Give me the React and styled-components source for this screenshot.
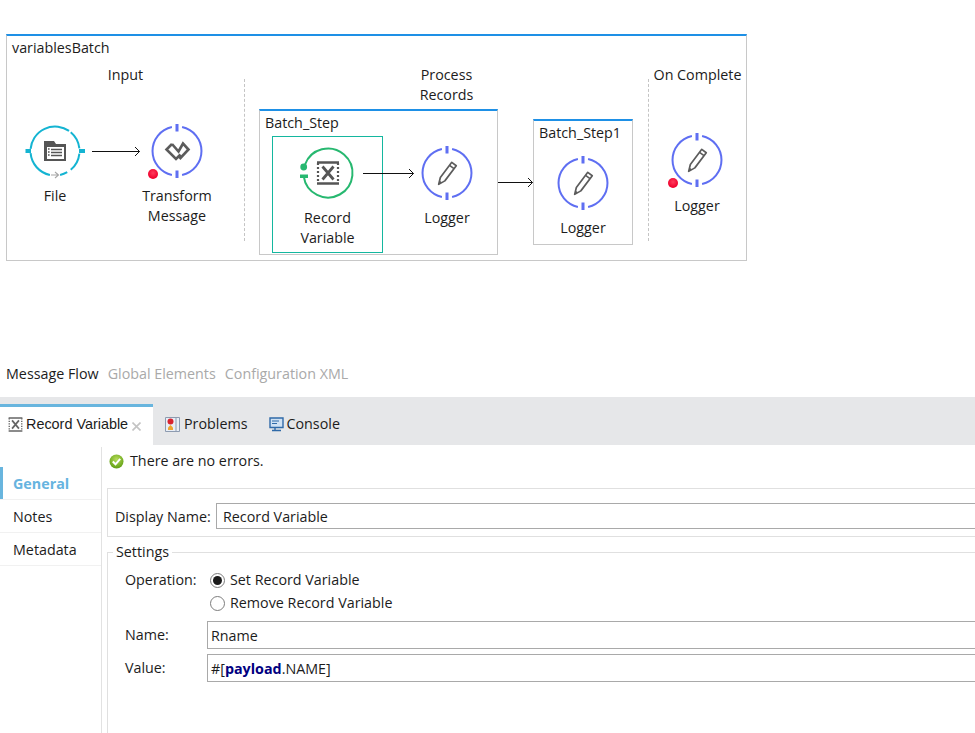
import React from 'react';
import styled, { createGlobalStyle } from 'styled-components';

const Global = createGlobalStyle`
  html, body { margin: 0; padding: 0; background: #fff; height: 733px; overflow: hidden; }
  body { font-family: "Open Sans", "Noto Sans", "Liberation Sans", sans-serif; font-size: 14.3px; line-height: 20px; color: #1c1c1c; }
`;

const FlowBox = styled.section`
  box-sizing: border-box; width: 741px; height: 227px; margin: 34px 0 0 6px;
  border: 1px solid #c8c8c8; border-top: 2px solid #1e90e6;
`;
const FlowTitle = styled.div`height: 29px; padding: 2px 0 0 5px; box-sizing: border-box;`;
const Lanes = styled.div`display: flex; align-items: flex-start;`;
const Lane = styled.div`width: ${p => p.$w}px; flex: none; display: flex; flex-direction: column;`;
const LaneTitle = styled.div`text-align: center;`;
const LaneSep = styled.div`width: 0; height: 162px; margin-top: 14px; flex: none; border-left: 1px dashed #c4c4c4;`;
const NodeRow = styled.div`display: flex; align-items: flex-start; padding-left: ${p => p.$pl || 0}px; margin-top: ${p => p.$mt || 0}px;`;

const NodeWrap = styled.div`
  width: ${p => p.$w}px; flex: none; position: relative; display: flex; flex-direction: column; align-items: center;
  margin-left: ${p => p.$ml || 0}px;
`;
const NodeIcon = styled.svg`width: 52px; height: 52px; overflow: visible; display: block;`;
const NodeLabel = styled.div`margin-top: ${p => p.$gap || 9}px; text-align: center; white-space: nowrap;`;
const RedDot = styled.span`
  position: absolute; width: 10px; height: 10px; border-radius: 50%; top: 44px; left: calc(50% - 29px);
  background: radial-gradient(circle at 50% 40%, #ff3b5c, #f0002c 70%);
`;
const Arrow = styled.svg`
  display: block; flex: none; width: ${p => p.$w}px; height: 10px; overflow: visible;
  margin-top: ${p => p.$mt || 0}px; margin-left: ${p => p.$ml || 0}px;
`;
const OverArrow = styled(Arrow)`position: absolute; left: ${p => p.$left}px; top: ${p => p.$top}px; margin: 0;`;

const StepBox = styled.div`
  box-sizing: border-box; width: ${p => p.$w}px; height: ${p => p.$h}px; flex: none; margin-top: ${p => p.$mt || 0}px;
  border: 1px solid #c8c8c8; border-top: 2px solid #1e90e6; position: relative;
`;
const StepTitle = styled.div`box-sizing: border-box; padding: 2px 0 0 5px; height: 20px; white-space: nowrap;`;
const StepBody = styled.div`display: flex; align-items: flex-start; padding: ${p => p.$pt}px 0 0 ${p => p.$pl}px;`;
const Selected = styled.div`
  box-sizing: border-box; width: 111px; height: 117px; border: 1px solid #14b79f; padding-top: 10px; flex: none;
  display: flex; justify-content: center;
`;
const LoggerPad = styled.div`padding-top: 11px;`;

const TabsLine = styled.nav`display: flex; gap: 9px; margin: 103px 0 0 6px; height: 20px;`;
const TabLink = styled.span`color: ${p => p.$on ? '#1c1c1c' : '#a9a9a9'};`;

const TabBar = styled.div`
  height: 48px; margin-top: 13px; background: #e6e7e9; display: flex; align-items: flex-end;
`;
const ActiveTab = styled.div`
  box-sizing: border-box; width: 153px; height: 41px; background: #fff; border-top: 3px solid #68b5de;
  display: flex; align-items: center; padding: 0 0 4px 8px; gap: 3px; font-family: "Liberation Sans", Arial, sans-serif; font-size: 14.4px;
`;
const PlainTab = styled.div`
  height: 41px; box-sizing: border-box; display: flex; align-items: center; padding: 3px 0 4px; gap: ${p => p.$gap}px; margin-left: ${p => p.$ml}px;
`;
const CloseMark = styled.svg`width: 9px; height: 9px; margin: 4px 0 0 1px; flex: none;`;
const TabIcon = styled.svg`width: 15px; height: 15px; flex: none; display: block;`;

const Panel = styled.div`display: flex; height: 288px;`;
const Side = styled.aside`
  box-sizing: border-box; width: 102px; flex: none; margin-top: 2px; border-right: 1px solid #e2e2e2;
  height: 286px; padding-top: 20px;
`;
const SideItem = styled.div`
  box-sizing: border-box; height: 33px; padding: 7px 0 0 13px; border-bottom: 1px solid #f1f1f1;
  ${p => p.$on && 'color: #66b4e0; font-weight: 700; box-shadow: inset 3px 0 0 #68b5de;'}
`;
const Main = styled.main`flex: 1; min-width: 0; overflow: hidden; padding-top: 6px;`;
const Status = styled.div`display: flex; align-items: center; gap: 6px; padding-left: 7px; height: 20px;`;
const NameGroup = styled.div`
  box-sizing: border-box; height: 49px; margin: 17px -12px 0 5px; border: 1px solid #e0e0e0; padding: 14px 0 0 7px;
  display: flex; align-items: flex-start;
`;
const NameLabel = styled.span`width: 101px; flex: none; padding-top: 4px;`;
const TextBox = styled.div`
  box-sizing: border-box; flex: 1; min-width: 0; height: ${p => p.$h}px; border: 1px solid #a9a9a9; border-right: 0;
  padding: 1px 0 0 ${p => p.$pl}px; display: flex; align-items: center; white-space: pre;
  margin-bottom: ${p => p.$mb || 0}px;
`;
const Settings = styled.fieldset`
  margin: 5px -12px 0 5px; padding: 8px 0 0 0; border: 1px solid #e0e0e0; height: 200px; min-width: 0;
`;
const SettingsLegend = styled.legend`padding: 0 3px 0 3px; margin-left: 5px; line-height: 20px;`;
const FormGrid = styled.div`display: grid; grid-template-columns: 82px 1fr; align-items: center; padding-left: 17px;`;
const RadioStack = styled.div`display: flex; flex-direction: column; gap: 3px; padding-left: 3px; margin-bottom: 8px;`;
const RadioRow = styled.div`display: flex; align-items: center; gap: 4px; height: 20px;`;
const Radio = styled.span`
  box-sizing: border-box; width: 15px; height: 15px; margin-right: 1px; border-radius: 50%; border: 1px solid #7d7d7d; background: #fff; flex: none;
  display: flex; align-items: center; justify-content: center;
  &::after { content: ''; width: 9px; height: 9px; border-radius: 50%; background: ${p => p.$on ? '#1c1c1c' : 'transparent'}; }
`;
const FieldLabel = styled.span`margin-bottom: ${p => p.$mb || 0}px; align-self: ${p => p.$top ? 'start' : 'center'};`;
const Keyword = styled.b`color: #000080; font-weight: 700;`;

const pt = (r, a) => { const t = (a - 90) * Math.PI / 180; return [(r * Math.cos(t)).toFixed(2), (r * Math.sin(t)).toFixed(2)]; };
const arc = (a0, a1, r = 24.5) => {
  const [x0, y0] = pt(r, a0), [x1, y1] = pt(r, a1);
  return `M${x0} ${y0}A${r} ${r} 0 ${a1 - a0 > 180 ? 1 : 0} 1 ${x1} ${y1}`;
};

const Ring = ({ segs, color }) => (
  <path d={segs.map(([a, b]) => arc(a, b)).join('')} fill="none" stroke={color} strokeWidth="2" />
);

const PencilGlyph = () => (
  <g transform="translate(-0.5 1) rotate(37)">
    <path d="M-2.8 -12.5H2.8V6.5L0 13L-2.8 6.5Z" fill="none" stroke="#5c5c5c" strokeWidth="1.7" strokeLinejoin="round" />
    <path d="M-2.8 -8.8H2.8" stroke="#5c5c5c" strokeWidth="1.6" />
    <path d="M-1.6 9.5H1.6L0 13Z" fill="#5c5c5c" />
  </g>
);

const XGlyph = ({ c = '#555' }) => (
  <g>
    <path d="M-11 -10.5H11M-11 10.5H11" stroke={c} strokeWidth="2.4" />
    <path d="M-10 -10V10M10 -10V10" stroke={c} strokeWidth="2.2" strokeDasharray="2 2" />
    <path d="M-5.5 -6.5L5.5 6.5M5.5 -6.5L-5.5 6.5" stroke={c} strokeWidth="2.8" />
  </g>
);

const LOGGER_SEGS = [[12, 168], [192, 348]];
const BLUE = '#5f6ff2';
const Bars = () => (
  <path d="M0 -27V-19.5M0 19.5V27" stroke={BLUE} strokeWidth="3" />
);

const LoggerIcon = () => (
  <NodeIcon viewBox="-26 -26 52 52">
    <Ring segs={LOGGER_SEGS} color={BLUE} />
    <Bars />
    <PencilGlyph />
  </NodeIcon>
);

const TransformIcon = () => (
  <NodeIcon viewBox="-26 -26 52 52">
    <Ring segs={LOGGER_SEGS} color={BLUE} />
    <Bars />
    <path d="M-5 -7L1.5 0.5L6 -7.5L11.5 -1.5L2.5 8M-5 -7L-10.5 -1.5L-1 8L3.5 3.5" fill="none" stroke="#5c5c5c" strokeWidth="2.6" />
  </NodeIcon>
);

const FileIcon = () => (
  <NodeIcon viewBox="-26 -26 52 52">
    <Ring segs={[[192, 265], [275, 395], [400, 444], [456, 500], [510, 528]]} color="#14b4d2" />
    <path d="M-29.5 -2H-24V2H-29.5ZM24 -2H30V2H24Z" fill="#14b4d2" />
    <path d="M-11 -10H-1L1 -7H11V10H-11Z" fill="#555" />
    <path d="M-8 -4H9V8H-8Z" fill="#fff" />
    <path d="M-4 -1.5H7M-4 1.5H7M-4 4.5H7" stroke="#555" strokeWidth="1.4" />
    <path d="M-7 -2H-5.4M-7 1H-5.4M-7 4H-5.4" stroke="#555" strokeWidth="1.6" />
    <path d="M-4 24H3M0 21L3.5 24L0 27" fill="none" stroke="#a6a6a6" strokeWidth="1.1" />
  </NodeIcon>
);

const RecordIcon = () => (
  <NodeIcon viewBox="-26 -26 52 52">
    <Ring segs={[[290, 622]]} color="#27b870" />
    <circle cx="-24.3" cy="-6" r="3.4" fill="#27b870" />
    <path d="M-28 1.5H-20V5H-28Z" fill="#27b870" />
    <XGlyph />
  </NodeIcon>
);

const arrowPath = w => `M0 5.5H${w - 0.5}M${w - 5} 1L${w - 0.5} 5.5L${w - 5} 10`;
const Connector = ({ w, mt, ml }) => (
  <Arrow $w={w} $mt={mt} $ml={ml} viewBox={`0 0 ${w} 10`}>
    <path d={arrowPath(w)} fill="none" stroke="#111" strokeWidth="1" />
  </Arrow>
);
const OverConnector = ({ w, left, top }) => (
  <OverArrow $w={w} $left={left} $top={top} viewBox={`0 0 ${w} 10`}>
    <path d={arrowPath(w)} fill="none" stroke="#111" strokeWidth="1" />
  </OverArrow>
);

const Node = ({ w, ml, gap, icon, dot, children }) => (
  <NodeWrap $w={w} $ml={ml}>
    {icon}
    {dot && <RedDot />}
    <NodeLabel $gap={gap}>{children}</NodeLabel>
  </NodeWrap>
);

export default function App() {
  return (
    <>
      <Global />
      <FlowBox>
        <FlowTitle>variablesBatch</FlowTitle>
        <Lanes>
          <Lane $w={237}>
            <LaneTitle>Input</LaneTitle>
            <NodeRow $pl={18} $mt={40}>
              <Node w={60} icon={<FileIcon />}>File</Node>
              <Connector w={48} mt={21} ml={7} />
              <Node w={74} icon={<TransformIcon />} dot>Transform<br />Message</Node>
            </NodeRow>
          </Lane>
          <LaneSep />
          <Lane $w={403}>
            <LaneTitle>Process<br />Records</LaneTitle>
            <NodeRow $pl={14} $mt={4}>
              <StepBox $w={239} $h={146}>
                <StepTitle>Batch_Step</StepTitle>
                <StepBody $pt={5} $pl={12}>
                  <Selected>
                    <Node w={80} icon={<RecordIcon />}>Record<br />Variable</Node>
                  </Selected>
                  <LoggerPad>
                    <Node w={70} ml={29} icon={<LoggerIcon />}>Logger</Node>
                  </LoggerPad>
                </StepBody>
                <OverConnector w={51} left={103} top={57} />
              </StepBox>
              <Connector w={35} mt={68} />
              <StepBox $w={100} $h={126} $mt={10}>
                <StepTitle>Batch_Step1</StepTitle>
                <StepBody $pt={16} $pl={14}>
                  <Node w={70} icon={<LoggerIcon />}>Logger</Node>
                </StepBody>
              </StepBox>
            </NodeRow>
          </Lane>
          <LaneSep />
          <Lane $w={97}>
            <LaneTitle>On Complete</LaneTitle>
            <NodeRow $pl={13} $mt={49}>
              <Node w={70} gap={10} icon={<LoggerIcon />} dot>Logger</Node>
            </NodeRow>
          </Lane>
        </Lanes>
      </FlowBox>

      <TabsLine>
        <TabLink $on>Message Flow</TabLink>
        <TabLink>Global Elements</TabLink>
        <TabLink>Configuration XML</TabLink>
      </TabsLine>

      <TabBar>
        <ActiveTab>
          <TabIcon viewBox="-12 -12 24 24"><XGlyph c="#666" /></TabIcon>
          Record Variable
          <CloseMark viewBox="0 0 9 9"><path d="M0.5 0.5L8.5 8.5M8.5 0.5L0.5 8.5" stroke="#c4c4c4" strokeWidth="1.6" /></CloseMark>
        </ActiveTab>
        <PlainTab $ml={12} $gap={4}>
          <TabIcon viewBox="0 0 15 15">
            <path d="M0.5 0.5H14.5V14.5H0.5Z" fill="#e9eef5" stroke="#8d9bb0" />
            <path d="M11 1V14" stroke="#8d9bb0" />
            <circle cx="5.5" cy="4.5" r="3" fill="#d8232f" />
            <path d="M3 13V10.5L5.5 8L8 10.5V13Z" fill="#eda531" />
          </TabIcon>
          Problems
        </PlainTab>
        <PlainTab $ml={22} $gap={2}>
          <TabIcon viewBox="0 0 15 15">
            <path d="M1 1H14V10.5H1Z" fill="#cfe1f3" stroke="#2f6aa8" strokeWidth="1.4" />
            <path d="M3 4H10M3 6.5H8" stroke="#2f6aa8" />
            <path d="M6 11V13M3 13.5H12" stroke="#2f6aa8" strokeWidth="1.4" />
          </TabIcon>
          Console
        </PlainTab>
      </TabBar>

      <Panel>
        <Side>
          <SideItem $on>General</SideItem>
          <SideItem>Notes</SideItem>
          <SideItem>Metadata</SideItem>
        </Side>
        <Main>
          <Status>
            <svg width="15" height="15" viewBox="0 0 15 15">
              <defs>
                <radialGradient id="okg" cx="50%" cy="35%" r="65%">
                  <stop offset="0" stopColor="#b7dc5b" />
                  <stop offset="1" stopColor="#5f9e12" />
                </radialGradient>
              </defs>
              <circle cx="7.5" cy="7.5" r="7" fill="url(#okg)" />
              <path d="M3.8 7.5L6.5 10.3L11.2 4.8" fill="none" stroke="#fff" strokeWidth="2" />
            </svg>
            There are no errors.
          </Status>
          <NameGroup>
            <NameLabel>Display Name:</NameLabel>
            <TextBox $h={26} $pl={6}>Record Variable</TextBox>
          </NameGroup>
          <Settings>
            <SettingsLegend>Settings</SettingsLegend>
            <FormGrid>
              <FieldLabel $top>Operation:</FieldLabel>
              <RadioStack>
                <RadioRow><Radio $on />Set Record Variable</RadioRow>
                <RadioRow><Radio />Remove Record Variable</RadioRow>
              </RadioStack>
              <FieldLabel $mb={5}>Name:</FieldLabel>
              <TextBox $h={28} $pl={3} $mb={5}>Rname</TextBox>
              <FieldLabel>Value:</FieldLabel>
              <TextBox $h={28} $pl={3}>#[<Keyword>payload</Keyword>.NAME]</TextBox>
            </FormGrid>
          </Settings>
        </Main>
      </Panel>
    </>
  );
}
